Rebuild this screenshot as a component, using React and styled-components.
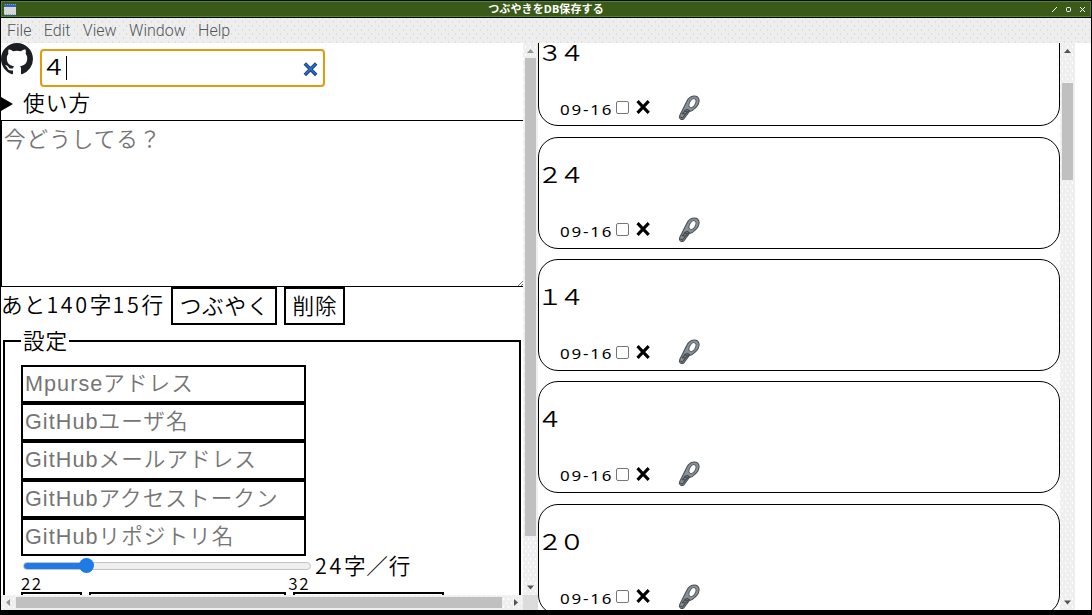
import React from "react";
import styled, { createGlobalStyle } from "styled-components";

const Global = createGlobalStyle`
  * { box-sizing: border-box; }
  html, body { margin: 0; padding: 0; }
  body { width: 1092px; height: 615px; overflow: hidden; background: #000; color: #000;
    font-family: "Noto Sans", "Noto Sans CJK JP", sans-serif; }
`;

const Window = styled.div`
  width: 1092px; height: 615px; display: flex; flex-direction: column;
  background: #000; padding: 1px 1px 5px 1px; overflow: hidden;
`;
const TitleBar = styled.header`
  flex: 0 0 16px; margin: 0 0 1px; display: grid; grid-template-columns: 60px 1fr 60px; align-items: center;
  background: #395a18; border: 1px solid #4f8a20; color: #fff;
  h1 { margin: 0; text-align: center; font: 700 11px/14px "Noto Sans", "Noto Sans CJK JP", sans-serif; letter-spacing: 0.1px; }
  > svg { margin-left: 1px; }
`;
const WindowButtons = styled.div`
  display: flex; justify-content: flex-end; padding-right: 4px; gap: 7px;
`;
const MenuBar = styled.nav`
  flex: 0 0 25px; display: flex; gap: 12.4px; padding: 0 6px; color: #50575a;
  background-color: #eee;
  background-image: radial-gradient(circle, #dcdcdc 0.7px, transparent 0.9px), radial-gradient(circle, #dcdcdc 0.7px, transparent 0.9px);
  background-size: 7px 8px; background-position: 0 0, 3px 4px;
  font: 300 16px/25px Roboto, sans-serif;
`;
const Body = styled.div`
  flex: 1; min-height: 0; display: flex; background: #fff;
`;
const LeftPane = styled.section`
  flex: 0 0 537px; display: grid; grid-template-columns: 522px 15px; grid-template-rows: 552px 15px;
`;
const LeftContent = styled.div`
  overflow: hidden; min-width: 0; font-size: 21.6px; letter-spacing: 0.8px; line-height: 34px;
  font-family: "Noto Sans CJK JP", sans-serif; font-weight: 350;
`;
const Track = styled.div`
  display: flex; flex-direction: ${(p) => (p.$horizontal ? "row" : "column")};
  justify-content: space-between; background-color: #efefef;
  background-image: radial-gradient(circle, #fff 0.7px, transparent 0.9px), radial-gradient(circle, #fff 0.7px, transparent 0.9px);
  background-size: 5px 8px; background-position: 0 0, 3px 4px;
  svg { flex: 0 0 15px; display: block; }
`;
const PageTrack = styled(Track)`flex: 0 0 15px;`;
const Thumb = styled.div`
  flex: 0 0 ${(p) => p.$size}px; background: #c0c0c0;
  margin: ${(p) => (p.$horizontal ? `2px auto 2px ${p.$start}px` : `${p.$start}px 2px auto`)};
`;
const Corner = styled.div`background: #dcdcdc;`;

const SearchRow = styled.div`
  display: flex; height: 44px;
  > svg { flex: 0 0 32px; margin-right: 7px; }
`;
const SearchBox = styled.div`
  width: 285px; height: 38px; margin-top: 6px; border: 2px solid #e29a10; border-radius: 4px;
  display: flex; align-items: center; padding: 0 5px 0 1px;
  svg { margin: 3px 0 0 auto; }
`;
const SearchText = styled.span`
  display: inline-block; width: 23px; line-height: 30px; margin-top: -4px;
  transform: scaleX(1.15);
`;
const Caret = styled.i`width: 1px; height: 24px; background: #000; margin-left: 0;`;
const Usage = styled.div`
  height: 33px; display: flex; align-items: center; gap: 10px; line-height: 31px;
  span { margin-top: -5px; letter-spacing: 1.1px; }
  &::before { content: ""; border-left: 12px solid #000; border-top: 7px solid transparent; border-bottom: 7px solid transparent; }
`;
const TweetArea = styled.div`
  height: 167px; border: 1px solid #000; border-right: 0; padding: 0 2px; color: #757575;
  display: flex; justify-content: space-between; letter-spacing: 1px;
  svg { align-self: flex-end; margin-right: -2px; }
`;
const Actions = styled.div`
  height: 38px; display: flex; line-height: 34px; white-space: nowrap;
  > span { width: 170px; letter-spacing: 1.1px; }
`;
const Digits = styled.b`font-weight: inherit; letter-spacing: 2.6px;`;
const ActionButton = styled.button`
  height: 38px; width: ${(p) => p.$width}px; margin: 0 7px 0 0; padding: 0 0 3px 1px; border: 2px solid #000;
  background: #fff; color: #000; font: inherit; line-height: 31px; letter-spacing: inherit; white-space: nowrap;
`;
const Settings = styled.fieldset`
  margin: 0 2px 0 2px; height: 300px; border: 2px solid #000; padding: 8px 16px 0; min-width: 0;
  legend { padding: 0 1px 0 2px; height: 32px; line-height: 30px; letter-spacing: 1px; }
`;
const Field = styled.div`
  width: 285px; height: 38.2px; border: 2px solid #000; padding-left: 2px; color: #757575; letter-spacing: 1.05px;
  font-family: "Liberation Sans", "Noto Sans CJK JP", sans-serif; line-height: 33px; white-space: nowrap;
`;
const SliderRow = styled.div`
  display: flex; height: 20px; align-items: center; gap: 4px; padding-left: 2px;
  span { line-height: 18px; margin-top: -2px; white-space: nowrap; }
`;
const Slider = styled.div`
  width: 288px; height: 8px; border-radius: 4px; border: 1px solid #c4c4c4; display: flex; align-items: center;
  background: linear-gradient(90deg, #1f7ae5 62px, #efefef 62px);
  background-origin: border-box;
  &::before { content: ""; width: 15px; height: 15px; margin-left: 55px; border-radius: 50%; background: #1f7ae5; }
`;
const Scale = styled.div`
  width: 289px; height: 16px; display: flex; justify-content: space-between;
  font-size: 17px; line-height: 13px; letter-spacing: 1.5px;
`;
const NextRow = styled.div`
  display: flex; gap: 7px;
  i { height: 30px; border: 2px solid #000; }
  i:nth-child(1) { width: 61px; } i:nth-child(2) { width: 197px; } i:nth-child(3) { width: 151px; }
`;

const Timeline = styled.section`
  flex: 0 0 522px; overflow: hidden; display: flex; flex-direction: column; gap: 10.5px;
  &::before { content: ""; flex: 0 0 0; margin-top: -39px; }
`;
const Card = styled.article`
  flex: 0 0 111.8px; border: 1px solid #000; border-radius: 20px; padding: 18px 0 0 0;
`;
const CardText = styled.p`
  margin: 0 0 0 -2px; height: 35px; font: 350 22px/35px "Noto Sans CJK JP", sans-serif;
  letter-spacing: -3.3px; transform: scaleX(1.17); transform-origin: 0 0;
`;
const CardFoot = styled.footer`
  display: flex; align-items: center; height: 28px; margin-top: 25px; padding-left: 21px;
`;
const PostDate = styled.time`
  width: 56px; font: 400 15px/28px "Noto Sans", sans-serif; letter-spacing: 1.6px; white-space: nowrap;
  padding-top: 2px; transform: scaleX(1.13); transform-origin: 0 0;
`;
const Check = styled.i`width: 13px; height: 13px; border: 1px solid #767676; border-radius: 2px; margin-right: 7px;`;

const Arrow = ({ d, c = "#505457" }) => {
  const shapes = { up: "M4 10h7L7.5 6z", down: "M4 5.5h7L7.5 9.5z", left: "M9 4v7L5 7.5z", right: "M6 4v7l4-3.5z" };
  return <svg width="15" height="15"><path d={shapes[d]} fill={c} /></svg>;
};
const GitHubMark = () => (
  <svg width="32" height="32" viewBox="0 0 16 16" fill="#1b1f23">
    <path fillRule="evenodd" d="M8 0C3.58 0 0 3.58 0 8c0 3.54 2.29 6.53 5.47 7.59.4.07.55-.17.55-.38 0-.19-.01-.82-.01-1.49-2.01.37-2.53-.49-2.69-.94-.09-.23-.48-.94-.82-1.13-.28-.15-.68-.52-.01-.53.63-.01 1.08.58 1.23.82.72 1.21 1.87.87 2.33.66.07-.52.28-.87.51-1.07-1.78-.2-3.64-.89-3.64-3.95 0-.87.31-1.59.82-2.15-.08-.2-.36-1.02.08-2.12 0 0 .67-.21 2.2.82.64-.18 1.32-.27 2-.27s1.36.09 2 .27c1.53-1.04 2.2-.82 2.2-.82.44 1.1.16 1.92.08 2.12.51.56.82 1.27.82 2.15 0 3.07-1.87 3.75-3.65 3.95.29.25.54.73.54 1.48 0 1.07-.01 1.93-.01 2.2 0 .21.15.46.55.38A8.01 8.01 0 0 0 16 8c0-4.42-3.58-8-8-8z" />
  </svg>
);
const ClearIcon = () => (
  <svg width="15" height="15" viewBox="0 0 15 15">
    <path d="M1.8 1.5L13.2 13M13.2 1.5L1.8 13" stroke="#183d80" strokeWidth="3.4" />
    <path d="M2.2 1.8l10.4 10.4M12.8 1.8L2.2 12.4" stroke="#2a72cf" strokeWidth="1.6" />
  </svg>
);
const CrossIcon = styled.svg`margin-top: -1px;`;
const Cross = () => (
  <CrossIcon width="14" height="14" viewBox="0 0 14 14"><path d="M1.5 1.2l11.2 11.6M12.7 1.2L1.5 12.8" stroke="#000" strokeWidth="3.1" /></CrossIcon>
);
const ClipIcon = styled.svg`width: 24px; height: 27px; margin: -1px 0 0 27px;`;
const Clip = () => (
  <ClipIcon viewBox="0 0 24 28">
    <path d="M2.5 22L5 17L9.5 8Q12 2.5 17 2Q22 1.8 22.5 6.5Q22.5 11 18.5 14.5Q16 17.5 12 18.5L9.5 22L6.5 26Q3.5 27.5 2 24.5Z" fill="#87919a" stroke="#484e51" strokeWidth="1.1" />
    <ellipse cx="15.6" cy="9.5" rx="3" ry="5" transform="rotate(28 15.6 9.5)" fill="#fff" stroke="#555c60" strokeWidth="1" />
    <path d="M5 21l3-4 2-1 2 1-3 3-3 4M5 20l4 1M3 24l3 1M7 17l3 2" fill="none" stroke="#444a4d" strokeWidth="1.3" />
  </ClipIcon>
);
const AppIcon = () => (
  <svg width="14" height="13" viewBox="0 0 14 13">
    <path d="M1 1h12v11H1z" fill="#d5d7d9" />
    <path d="M1 2.5h12" stroke="#2f66b8" strokeWidth="3" />
    <path d="M2 1.5h11" stroke="#6ba2e6" strokeDasharray="1 1" />
    <path d="M1 12h12" stroke="#2f73c8" strokeDasharray="1 1" />
  </svg>
);

const fields = ["Mpurseアドレス", "GitHubユーザ名", "GitHubメールアドレス", "GitHubアクセストークン", "GitHubリポジトリ名"];
const posts = ["３４", "２４", "１４", "４", "２０"];

export default function App() {
  return (
    <Window>
      <Global />
      <TitleBar>
        <AppIcon />
        <h1>つぶやきをDB保存する</h1>
        <WindowButtons>
          <svg width="7" height="7"><path d="M1 6l5-5" stroke="#fff" /></svg>
          <svg width="7" height="7"><rect x="1.5" y="1.5" width="4" height="4" rx="1" fill="none" stroke="#fff" /></svg>
          <svg width="7" height="7"><path d="M1 1l5 5M6 1L1 6" stroke="#fff" /></svg>
        </WindowButtons>
      </TitleBar>
      <MenuBar>
        {["File", "Edit", "View", "Window", "Help"].map((m) => <span key={m}>{m}</span>)}
      </MenuBar>
      <Body>
        <LeftPane>
          <LeftContent>
            <SearchRow>
              <GitHubMark />
              <SearchBox><SearchText>４</SearchText><Caret /><ClearIcon /></SearchBox>
            </SearchRow>
            <Usage><span>使い方</span></Usage>
            <TweetArea>今どうしてる？<svg width="5" height="5"><path d="M0 5l5-5M3 5l2-2" stroke="#777" /></svg></TweetArea>
            <Actions>
              <span>あと<Digits>140</Digits>字<Digits>15</Digits>行</span>
              <ActionButton $width={106}>つぶやく</ActionButton>
              <ActionButton $width={61}>削除</ActionButton>
            </Actions>
            <Settings>
              <legend>設定</legend>
              {fields.map((f) => <Field key={f}>{f}</Field>)}
              <SliderRow><Slider /><span><Digits>24</Digits>字／行</span></SliderRow>
              <Scale><span>22</span><span>32</span></Scale>
              <NextRow><i /><i /><i /></NextRow>
            </Settings>
          </LeftContent>
          <Track><Arrow d="up" c="#909496" /><Thumb $size={478} $start={0} /><Arrow d="down" /></Track>
          <Track $horizontal><Arrow d="left" c="#909496" /><Thumb $horizontal $size={486} $start={0} /><Arrow d="right" /></Track>
          <Corner />
        </LeftPane>
        <Timeline>
          {posts.map((p) => (
            <Card key={p}>
              <CardText>{p}</CardText>
              <CardFoot><PostDate>09-16</PostDate><Check /><Cross /><Clip /></CardFoot>
            </Card>
          ))}
        </Timeline>
        <PageTrack><Arrow d="up" /><Thumb $size={97} $start={25} /><Arrow d="down" /></PageTrack>
      </Body>
    </Window>
  );
}
